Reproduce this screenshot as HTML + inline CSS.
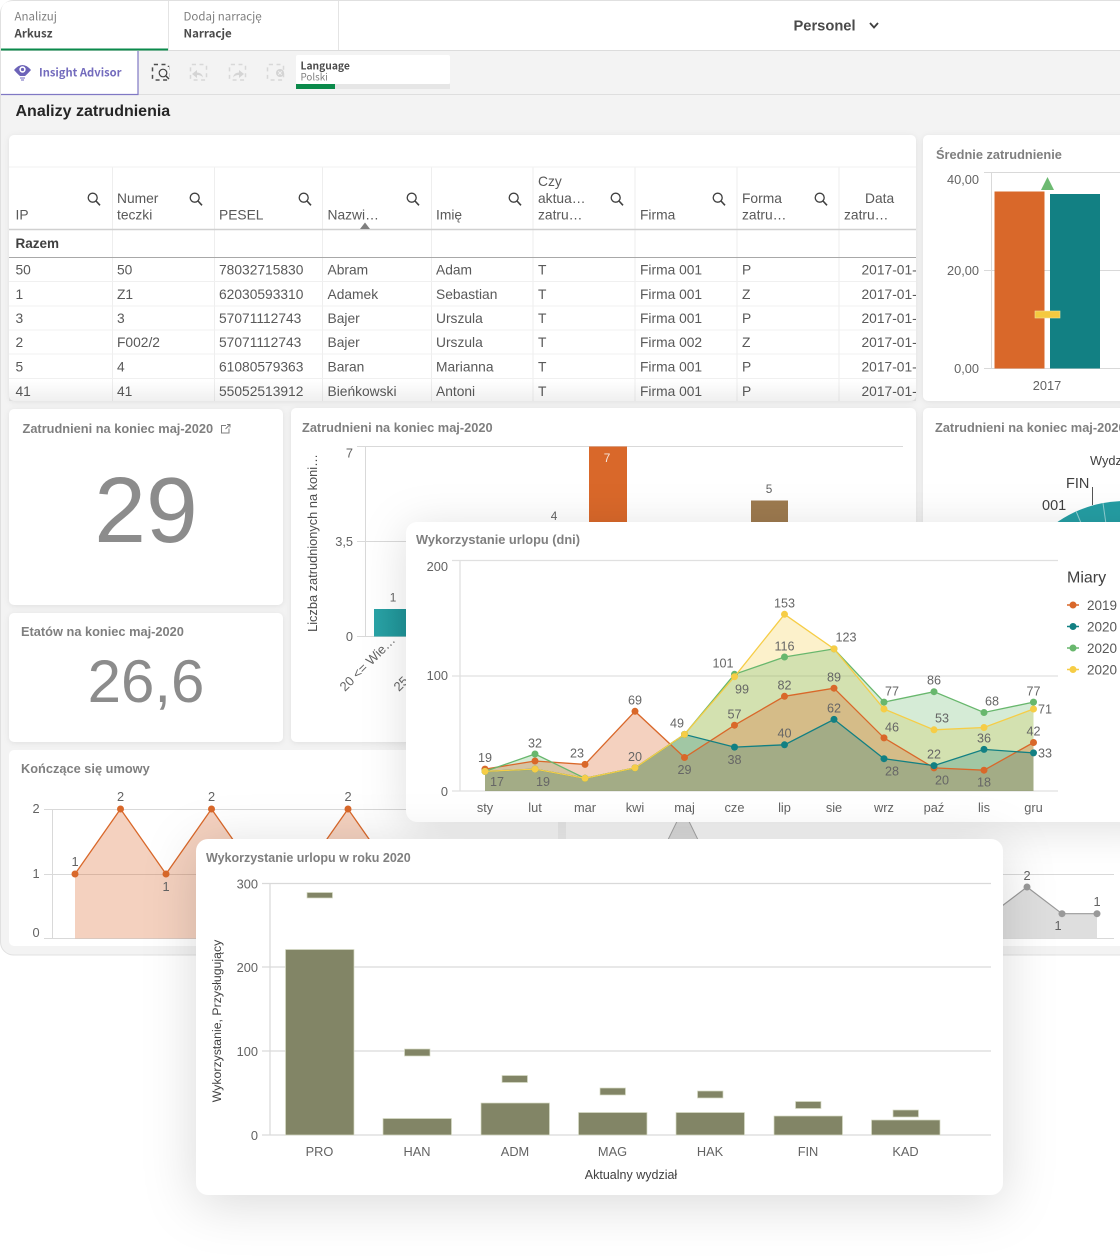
<!DOCTYPE html>
<html lang="pl"><head><meta charset="utf-8"><title>Analizy zatrudnienia</title>
<style>
html,body{margin:0;padding:0;background:#fff;width:1120px;height:1256px;overflow:hidden}
svg{display:block}
text{font-family:"Liberation Sans",sans-serif;fill:#595959;font-size:13.5px}
.s text,text.s{font-family:"Noto Sans CJK JP","Liberation Sans",sans-serif}
.t{font-weight:700;fill:#7f7f7f;font-size:12.8px}
.c text{text-anchor:middle}
.e text{text-anchor:end}
.r text{font-size:13.8px}
.dl text{text-anchor:middle;font-size:12.6px;fill:#666}
.ax text{fill:#636363;font-size:12.8px}
</style></head><body>
<svg width="1120" height="1256" viewBox="0 0 1120 1256" xmlns="http://www.w3.org/2000/svg">
<defs>
<symbol id="q" viewBox="0 0 14 14" overflow="visible"><circle cx="5.7" cy="5.7" r="4.5" fill="none" stroke="#404040" stroke-width="1.3"/><path d="M9 9l4 4.3" stroke="#404040" stroke-width="1.6" fill="none"/></symbol>
<marker id="mo" markerUnits="userSpaceOnUse" markerWidth="8" markerHeight="8" refX="4" refY="4"><circle cx="4" cy="4" r="3.5" fill="#d9682a"/></marker>
<marker id="mt" markerUnits="userSpaceOnUse" markerWidth="8" markerHeight="8" refX="4" refY="4"><circle cx="4" cy="4" r="3.5" fill="#128083"/></marker>
<marker id="mg" markerUnits="userSpaceOnUse" markerWidth="8" markerHeight="8" refX="4" refY="4"><circle cx="4" cy="4" r="3.5" fill="#68b76d"/></marker>
<marker id="my" markerUnits="userSpaceOnUse" markerWidth="8" markerHeight="8" refX="4" refY="4"><circle cx="4" cy="4" r="3.5" fill="#f6cd46"/></marker>
<marker id="mn" markerUnits="userSpaceOnUse" markerWidth="8" markerHeight="8" refX="4" refY="4"><circle cx="4" cy="4" r="3.5" fill="#999"/></marker>
<clipPath id="tb"><rect x="9" y="135" width="907" height="266"/></clipPath>
<linearGradient id="fd" x1="0" y1="0" x2="0" y2="1"><stop offset="0" stop-color="#000" stop-opacity="0"/><stop offset="1" stop-color="#000" stop-opacity=".06"/></linearGradient>
<linearGradient id="tl" x1="0" y1="0" x2="1" y2="0"><stop offset="0" stop-color="#2aa3a6"/><stop offset="1" stop-color="#1d9094"/></linearGradient>
</defs>

<!-- app frame -->
<rect x="0.5" y="0.5" width="1140" height="954.5" rx="13" fill="#f3f3f3" stroke="#e0e0e0"/>
<path d="M1 50V13Q1 1 13 1H1120V50Z" fill="#fff"/>
<path d="M0 50.5H1120" stroke="#dcdcdc"/>
<path d="M168.5 1V50M338.5 1V50" stroke="#e4e4e4"/>
<path d="M1 49.5H168" stroke="#0b8a4b" stroke-width="2"/>
<g class="s">
<text x="14.5" y="20.5" style="font-size:11.5px;fill:#7f7f7f">Analizuj</text>
<text x="14.5" y="37.5" style="font-size:11.5px;font-weight:700;fill:#4a4a4a">Arkusz</text>
<text x="183.5" y="20.5" style="font-size:11.5px;fill:#7f7f7f">Dodaj narrację</text>
<text x="183.5" y="37.5" style="font-size:11.5px;font-weight:700;fill:#4a4a4a">Narracje</text>
</g>
<text x="793.5" y="30.5" style="font-size:14.7px;font-weight:700;fill:#4a4a4a">Personel</text>
<path d="M870 23l4 4.5 4-4.5" fill="none" stroke="#404040" stroke-width="1.8"/>

<!-- toolbar -->
<path d="M0 94.5H1120" stroke="#dedede"/>
<path d="M1 51H138V94.5H1Z" fill="#fff"/>
<path d="M138 51V94.5H1" fill="none" stroke="#8078c4" stroke-width="1.2"/>
<path d="M14 70Q22.5 60 31 70Q26.5 75 25 76H20Q18.500 75 14 70Z" fill="#6c63b8"/><circle cx="22.5" cy="69.500" r="3.2" fill="#fff"/><circle cx="22.5" cy="69.500" r="1.6" fill="#6c63b8"/><path d="M20 78h5M21 80h3" stroke="#8a83c9" stroke-width="1.3"/>
<text class="s" x="39" y="76.5" style="font-size:11.2px;font-weight:700;fill:#736bbd">Insight Advisor</text>
<g fill="none" stroke-width="1.5" stroke-dasharray="4 3.5">
<rect x="152.5" y="64.5" width="16" height="15.5" rx="1.5" stroke="#4d4d4d"/>
<rect x="190.5" y="64.5" width="16" height="15.5" rx="1.5" stroke="#d8d8d8"/>
<rect x="229.5" y="64.5" width="16" height="15.5" rx="1.5" stroke="#d8d8d8"/>
<rect x="267.5" y="64.5" width="16" height="15.5" rx="1.5" stroke="#d8d8d8"/>
</g>
<rect x="156" y="67" width="13" height="11" fill="#f3f3f3"/>
<circle cx="163" cy="73" r="3.8" fill="none" stroke="#404040" stroke-width="1.2"/><path d="M166 76l3 3" stroke="#404040" stroke-width="1.4"/>
<path d="M192 74l5-4v2.500q5 0 6 5-2-2.500-6-2.500v3z" fill="#d4d4d4"/>
<path d="M244 74l-5-4v2.500q-5 0-6 5 2-2.500 6-2.500v3z" fill="#d4d4d4"/>
<circle cx="280" cy="73" r="4" fill="#d4d4d4"/><path d="M278.3 71.3l3.400 3.400m0-3.400l-3.400 3.400" stroke="#f3f3f3" stroke-width="1"/>
<rect x="296" y="55" width="154" height="29" rx="2" fill="#fff"/>
<rect x="296" y="84" width="154" height="5" fill="#e6e6e6"/><rect x="296" y="84" width="39" height="5" fill="#0b8a4b"/>
<text class="s" x="300.5" y="69.5" style="font-size:10.3px;font-weight:700;fill:#4a4a4a">Language</text>
<text class="s" x="300.5" y="80.5" style="font-size:9.8px;fill:#7f7f7f">Polski</text>
<text x="15.5" y="116" style="font-size:16px;font-weight:700;fill:#262626">Analizy zatrudnienia</text>

<!-- table card -->
<rect x="9" y="135" width="907" height="266" rx="5" fill="#fff" style="filter:drop-shadow(0 1px 3px rgba(0,0,0,.08))"/>
<g clip-path="url(#tb)">
<path d="M112.5 167V401M214.5 167V401M322.5 167V401M431.5 167V401M533 167V401M635 167V401M737 167V401M839 167V401" stroke="#eeeeee"/>
<path d="M9 167H916" stroke="#f1f1f1"/>
<path d="M9 229.5H916" stroke="#d0d0d0" stroke-width="1.4"/>
<path d="M9 257.5H916" stroke="#a8a8a8"/>
<path d="M9 281.5H916M9 306H916M9 330H916M9 354H916M9 378.5H916" stroke="#f0f0f0"/>
<g class="r">
<text x="15.500" y="219.5">IP</text>
<text x="117" y="203">Numer</text><text x="117" y="219.5">teczki</text>
<text x="219" y="219.5">PESEL</text>
<text x="327.5" y="219.5">Nazwi…</text>
<text x="436" y="219.5">Imię</text>
<text x="538" y="186">Czy</text><text x="538" y="203">aktua…</text><text x="538" y="219.5">zatru…</text>
<text x="640" y="219.5">Firma</text>
<text x="742" y="203">Forma</text><text x="742" y="219.5">zatru…</text>
<text x="865" y="203">Data</text><text x="844" y="219.5">zatru…</text>
<text x="15.5" y="248" style="font-weight:700;fill:#404040;font-size:13.5px">Razem</text>

<text x="15.500" y="274.5">50</text><text x="117" y="274.5">50</text><text x="219" y="274.5">78032715830</text><text x="327.5" y="274.5">Abram</text><text x="436" y="274.5">Adam</text><text x="538" y="274.5">T</text><text x="640" y="274.5">Firma 001</text><text x="742" y="274.5">P</text><text x="861.5" y="274.5">2017-01-</text>
<text x="15.500" y="299">1</text><text x="117" y="299">Z1</text><text x="219" y="299">62030593310</text><text x="327.5" y="299">Adamek</text><text x="436" y="299">Sebastian</text><text x="538" y="299">T</text><text x="640" y="299">Firma 001</text><text x="742" y="299">Z</text><text x="861.5" y="299">2017-01-</text>
<text x="15.500" y="323">3</text><text x="117" y="323">3</text><text x="219" y="323">57071112743</text><text x="327.5" y="323">Bajer</text><text x="436" y="323">Urszula</text><text x="538" y="323">T</text><text x="640" y="323">Firma 001</text><text x="742" y="323">P</text><text x="861.5" y="323">2017-01-</text>
<text x="15.500" y="347">2</text><text x="117" y="347">F002/2</text><text x="219" y="347">57071112743</text><text x="327.5" y="347">Bajer</text><text x="436" y="347">Urszula</text><text x="538" y="347">T</text><text x="640" y="347">Firma 002</text><text x="742" y="347">Z</text><text x="861.5" y="347">2017-01-</text>
<text x="15.500" y="371.5">5</text><text x="117" y="371.5">4</text><text x="219" y="371.5">61080579363</text><text x="327.5" y="371.5">Baran</text><text x="436" y="371.5">Marianna</text><text x="538" y="371.5">T</text><text x="640" y="371.5">Firma 001</text><text x="742" y="371.5">P</text><text x="861.5" y="371.5">2017-01-</text>
<text x="15.500" y="396">41</text><text x="117" y="396">41</text><text x="219" y="396">55052513912</text><text x="327.5" y="396">Bieńkowski</text><text x="436" y="396">Antoni</text><text x="538" y="396">T</text><text x="640" y="396">Firma 001</text><text x="742" y="396">P</text><text x="861.5" y="396">2017-01-</text>
</g>
<use href="#q" x="87" y="192" width="14" height="14"/><use href="#q" x="189" y="192" width="14" height="14"/><use href="#q" x="298" y="192" width="14" height="14"/><use href="#q" x="406" y="192" width="14" height="14"/><use href="#q" x="508" y="192" width="14" height="14"/><use href="#q" x="610" y="192" width="14" height="14"/><use href="#q" x="712" y="192" width="14" height="14"/><use href="#q" x="814" y="192" width="14" height="14"/>
<path d="M360 229l5-6.5 5 6.500z" fill="#7f7f7f"/>
<rect x="9" y="380" width="907" height="21" fill="url(#fd)"/>
</g>

<!-- average card -->
<rect x="923" y="135" width="220" height="266" rx="5" fill="#fff" style="filter:drop-shadow(0 1px 3px rgba(0,0,0,.08))"/>
<text class="t" x="936" y="159">Średnie zatrudnienie</text>
<path d="M984 172.5H1120M984 270.5H1120M984 368.5H1120M991.5 172V368" stroke="#d9d9d9"/>
<rect x="994.5" y="191.5" width="50" height="177" fill="#d9682a"/>
<rect x="1050" y="194" width="50" height="174.5" fill="#128083"/>
<path d="M1047.5 177l6.500 13h-13z" fill="#6dba72"/>
<rect x="1035" y="311" width="25" height="7" fill="#f5c93f" stroke="#eee29c" stroke-width=".6"/>
<g class="e ax"><text x="979" y="184">40,00</text><text x="979" y="275">20,00</text><text x="979" y="373">0,00</text></g>
<text class="ax" x="1047" y="390" text-anchor="middle" style="fill:#636363;font-size:12.8px">2017</text>

<!-- KPI cards -->
<rect x="9" y="409" width="274" height="196" rx="5" fill="#fff" style="filter:drop-shadow(0 1px 3px rgba(0,0,0,.08))"/>
<text class="t" x="22.500" y="433">Zatrudnieni na koniec maj-2020</text>
<path d="M226 425.5h-4.500v7.500h7.500v-4.500M225.5 429l4.500-4.500m-3 0h3v3" fill="none" stroke="#7f7f7f"/>
<text x="146" y="542" text-anchor="middle" style="font-size:93px;fill:#8c8c8c">29</text>
<rect x="9" y="613" width="274" height="129" rx="5" fill="#fff" style="filter:drop-shadow(0 1px 3px rgba(0,0,0,.08))"/>
<text class="t" x="21" y="636">Etatów na koniec maj-2020</text>
<text x="146" y="702" text-anchor="middle" style="font-size:60px;fill:#8c8c8c">26,6</text>

<!-- headcount bar chart -->
<rect x="291" y="408" width="625" height="334" rx="5" fill="#fff" style="filter:drop-shadow(0 1px 3px rgba(0,0,0,.08))"/>
<text class="t" x="302" y="432">Zatrudnieni na koniec maj-2020</text>
<path d="M357 446.5H903M357 541.5H903M357 636.5H903M365.5 446V636" stroke="#d9d9d9"/>
<rect x="374" y="609" width="38" height="27.5" fill="url(#tl)"/>
<rect x="589" y="446.5" width="38" height="80" fill="#d9682a"/>
<rect x="751" y="500.5" width="37" height="26" fill="#9d7a4f"/>
<g class="e ax"><text x="353" y="457.5">7</text><text x="353" y="546">3,5</text><text x="353" y="641">0</text></g>
<g class="c ax"><text x="393" y="601.5" style="font-size:11.8px">1</text><text x="554" y="520" style="font-size:11.8px">4</text><text x="607" y="462" style="font-size:11.8px;fill:#f5e6dc">7</text><text x="769" y="493" style="font-size:11.8px">5</text></g>
<text x="317" y="543" text-anchor="middle" transform="rotate(-90 317 543)" style="font-size:12.8px;fill:#4d4d4d">Liczba zatrudnionych na koni…</text>
<text x="345" y="692" transform="rotate(-45 345 692)" style="font-size:13px;fill:#636363">20 &lt;= Wie…</text>
<text x="399" y="692" transform="rotate(-45 399 692)" style="font-size:13px;fill:#636363">25</text>

<!-- pie card -->
<rect x="923" y="408" width="220" height="334" rx="5" fill="#fff" style="filter:drop-shadow(0 1px 3px rgba(0,0,0,.08))"/>
<text class="t" x="935" y="432">Zatrudnieni na koniec maj-2020</text>
<text x="1090" y="465" style="font-size:12.8px;fill:#404040">Wydz</text>
<text x="1066" y="488" style="font-size:14.5px;fill:#404040">FIN</text>
<text x="1042" y="510" style="font-size:14.5px;fill:#404040">001</text>
<path d="M1092.5 487V505" stroke="#555"/>
<circle cx="1125" cy="620" r="119" fill="#259ea4"/>
<path d="M1076 511l10 24M1103 503l4 28" stroke="#8fcfd2"/>

<!-- contract cards -->
<rect x="9" y="750" width="549" height="196" rx="5" fill="#fff"/>
<text class="t" x="21" y="773">Kończące się umowy</text>
<path d="M44 809.5H558M44 874.5H558M44 938.5H558M52.5 809V938" stroke="#d9d9d9"/>
<path d="M75 874L120.5 809L166 874L211.5 809L257 874L302.5 874L348 809L393.5 874V938.5H75Z" fill="#d9682a" fill-opacity=".3"/>
<polyline points="75,874 120.5,809 166,874 211.5,809 257,874 302.5,874 348,809 393.5,874" fill="none" stroke="#d9682a" stroke-width="1.3" marker-start="url(#mo)" marker-mid="url(#mo)" marker-end="url(#mo)"/>
<g class="c ax"><text x="36" y="813">2</text><text x="36" y="878">1</text><text x="36" y="937">0</text><text x="120.5" y="801">2</text><text x="211.5" y="801">2</text><text x="348" y="801">2</text><text x="75" y="866">1</text><text x="166" y="891">1</text></g>
<rect x="566" y="750" width="570" height="196" rx="5" fill="#fff"/>
<path d="M566 874.5H1114M566 938.5H1114" stroke="#d9d9d9"/>
<path d="M645 887L683 809L721 887Z" fill="#e2e2e2" stroke="#aaa"/>
<path d="M990 915L1027 887L1062 913.7L1097 913.7V938.5H990Z" fill="#dedede"/>
<polyline points="990,915 1027,887 1062,913.7 1097,913.7" fill="none" stroke="#999" stroke-width="1.2" marker-mid="url(#mn)" marker-end="url(#mn)"/>
<g class="c ax"><text x="1027" y="880">2</text><text x="1058" y="930">1</text><text x="1097" y="906">1</text></g>

<!-- line chart overlay -->
<rect x="406" y="522" width="760" height="300" rx="11" fill="#fff" style="filter:drop-shadow(0 6px 22px rgba(0,0,0,.13))"/>
<text class="t" x="416" y="544">Wykorzystanie urlopu (dni)</text>
<path d="M452 560.5H1058M452 676H1058M452 791H1058M460 560V791" stroke="#e0e0e0" stroke-width="1.3"/>
<polygon points="485,771.4 535,769.1 585,778.3 635,767.9 684.5,734.4 734.5,676.7 784.5,614.3 834,648.9 884,709 934,729.8 984,727.5 1033.5,709 1033.5,791 485,791" fill="#f6cd46" fill-opacity=".28"/>
<polygon points="485,771.4 535,754 585,778.3 635,767.9 684.5,734.4 734.5,674.3 784.5,657 834,648.9 884,702.1 934,691.7 984,712.5 1033.5,702.1 1033.5,791 485,791" fill="#68b76d" fill-opacity=".28"/>
<polygon points="485,769.1 535,761 585,764.4 635,711.3 684.5,757.5 734.5,725.2 784.5,696.3 834,688.2 884,737.9 934,767.9 984,770.2 1033.5,742.5 1033.5,791 485,791" fill="#d9682a" fill-opacity=".3"/>
<polygon points="485,771.4 535,769.1 585,778.3 635,767.9 684.5,734.4 734.5,747.1 784.5,744.8 834,719.4 884,758.7 934,765.6 984,749.4 1033.5,752.9 1033.5,791 485,791" fill="#128083" fill-opacity=".26"/>
<g fill="none" stroke-width="1.3">
<polyline points="485,769.1 535,761 585,764.4 635,711.3 684.5,757.5 734.5,725.2 784.5,696.3 834,688.2 884,737.9 934,767.9 984,770.2 1033.5,742.5" stroke="#d9682a" marker-start="url(#mo)" marker-mid="url(#mo)" marker-end="url(#mo)"/>
<polyline points="485,771.4 535,769.1 585,778.3 635,767.9 684.5,734.4 734.5,747.1 784.5,744.8 834,719.4 884,758.7 934,765.6 984,749.4 1033.5,752.9" stroke="#128083" marker-start="url(#mt)" marker-mid="url(#mt)" marker-end="url(#mt)"/>
<polyline points="485,771.4 535,754 585,778.3 635,767.9 684.5,734.4 734.5,674.3 784.5,657 834,648.9 884,702.1 934,691.7 984,712.5 1033.5,702.1" stroke="#68b76d" marker-start="url(#mg)" marker-mid="url(#mg)" marker-end="url(#mg)"/>
<polyline points="485,771.4 535,769.1 585,778.3 635,767.9 684.5,734.4 734.5,676.7 784.5,614.3 834,648.9 884,709 934,729.8 984,727.5 1033.5,709" stroke="#f6cd46" marker-start="url(#my)" marker-mid="url(#my)" marker-end="url(#my)"/>
</g>
<g class="e ax"><text x="448" y="571">200</text><text x="448" y="680">100</text><text x="448" y="796">0</text></g>
<g class="c ax"><text x="485" y="812">sty</text><text x="535" y="812">lut</text><text x="585" y="812">mar</text><text x="635" y="812">kwi</text><text x="684.5" y="812">maj</text><text x="734.5" y="812">cze</text><text x="784.5" y="812">lip</text><text x="834" y="812">sie</text><text x="884" y="812">wrz</text><text x="934" y="812">paź</text><text x="984" y="812">lis</text><text x="1033.5" y="812">gru</text></g>
<g class="dl">
<text x="485" y="762">19</text><text x="497" y="786">17</text><text x="535" y="747.5">32</text><text x="543" y="786">19</text><text x="577" y="757.5">23</text><text x="635" y="704.5">69</text><text x="635" y="761">20</text><text x="677" y="727.5">49</text><text x="684.5" y="774">29</text><text x="723" y="667.5">101</text><text x="742" y="693.5">99</text><text x="734.5" y="718.5">57</text><text x="734.5" y="764">38</text><text x="784.5" y="607.5">153</text><text x="784.5" y="650.5">116</text><text x="784.5" y="689.5">82</text><text x="784.5" y="737.5">40</text><text x="846" y="641.5">123</text><text x="834" y="681.5">89</text><text x="834" y="712.5">62</text><text x="892" y="695.5">77</text><text x="892" y="731.5">46</text><text x="892" y="775.5">28</text><text x="934" y="684.5">86</text><text x="942" y="722.5">53</text><text x="934" y="758.5">22</text><text x="942" y="784.5">20</text><text x="992" y="705.5">68</text><text x="984" y="742.5">36</text><text x="984" y="786.5">18</text><text x="1033.5" y="695.5">77</text><text x="1045" y="713.5">71</text><text x="1033.5" y="735.5">42</text><text x="1045" y="757.5">33</text>
</g>
<text x="1067" y="582.5" style="font-size:16px;fill:#404040">Miary</text>
<path d="M1067 605H1079" stroke="#d9682a" stroke-width="1.5"/><circle cx="1073" cy="605" r="3.5" fill="#d9682a"/>
<path d="M1067 626.5H1079" stroke="#128083" stroke-width="1.5"/><circle cx="1073" cy="626.5" r="3.5" fill="#128083"/>
<path d="M1067 648H1079" stroke="#68b76d" stroke-width="1.5"/><circle cx="1073" cy="648" r="3.5" fill="#68b76d"/>
<path d="M1067 669.5H1079" stroke="#f6cd46" stroke-width="1.5"/><circle cx="1073" cy="669.5" r="3.5" fill="#f6cd46"/>
<g><text x="1087" y="610">2019</text><text x="1087" y="631.5">2020</text><text x="1087" y="653">2020</text><text x="1087" y="674.5">2020</text></g>

<!-- bar chart overlay -->
<rect x="196" y="839" width="807" height="356" rx="12" fill="#fff" style="filter:drop-shadow(0 8px 26px rgba(0,0,0,.15))"/>
<text class="t" x="206" y="862" style="font-size:12.5px">Wykorzystanie urlopu w roku 2020</text>
<path d="M262 883.5H991M262 967H991M262 1051H991M262 1135H991M270 883V1135" stroke="#d9d9d9" stroke-width="1.2"/>
<g fill="#828566" stroke="#d8dcc6" stroke-width=".7">
<rect x="285.5" y="949.5" width="68.5" height="185.5"/>
<rect x="383" y="1118.5" width="68.5" height="16.5"/>
<rect x="481" y="1103" width="68.5" height="32"/>
<rect x="578.5" y="1112.5" width="68.5" height="22.5"/>
<rect x="676" y="1112.5" width="68.5" height="22.5"/>
<rect x="774" y="1116" width="68.5" height="19"/>
<rect x="871.5" y="1120" width="68.5" height="15"/>
<rect x="307" y="892.5" width="25.5" height="5.5"/>
<rect x="404.5" y="1049" width="25.5" height="7"/>
<rect x="502" y="1075.5" width="25.5" height="7"/>
<rect x="600" y="1088" width="25.5" height="7"/>
<rect x="697.5" y="1091" width="25.5" height="7"/>
<rect x="795.5" y="1101.5" width="25.5" height="7"/>
<rect x="893" y="1110" width="25.5" height="7"/>
</g>
<g class="e ax"><text x="258" y="888.5">300</text><text x="258" y="972">200</text><text x="258" y="1056">100</text><text x="258" y="1140">0</text></g>
<g class="c ax"><text x="319.5" y="1156">PRO</text><text x="417" y="1156">HAN</text><text x="515" y="1156">ADM</text><text x="612.5" y="1156">MAG</text><text x="710" y="1156">HAK</text><text x="808" y="1156">FIN</text><text x="905.5" y="1156">KAD</text></g>
<text x="631" y="1179" text-anchor="middle" style="font-size:12.5px;fill:#404040">Aktualny wydział</text>
<text x="221" y="1021" text-anchor="middle" transform="rotate(-90 221 1021)" style="font-size:12.3px;fill:#404040">Wykorzystanie, Przysługujący</text>
</svg>
</body></html>
